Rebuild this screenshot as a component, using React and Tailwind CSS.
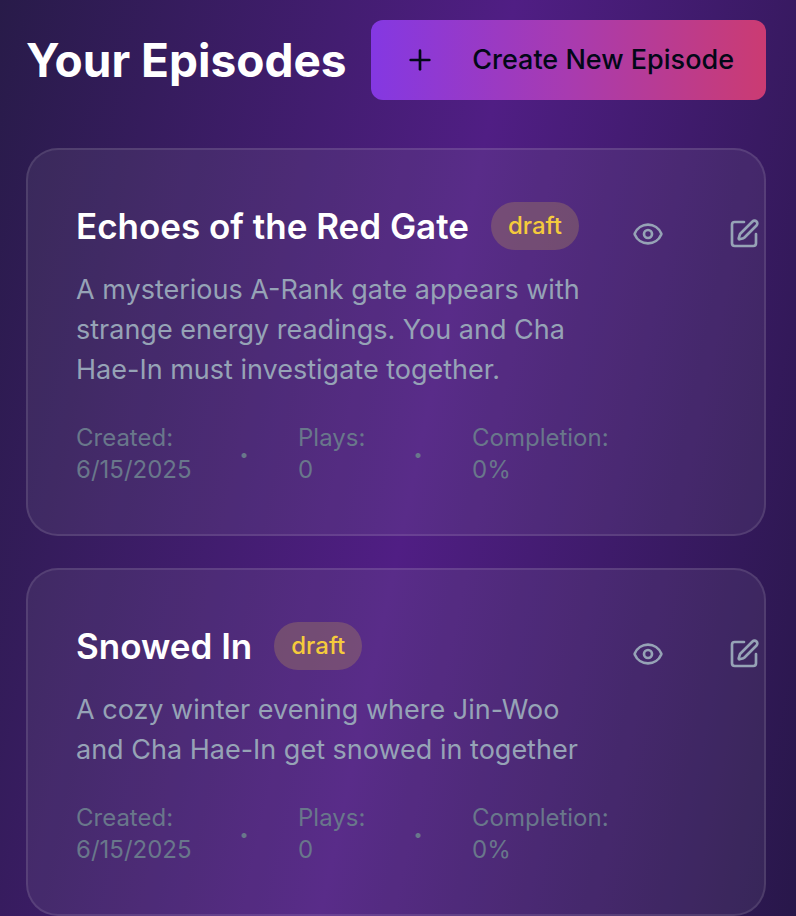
import { Eye, Plus, SquarePen } from "lucide-react";

const episodes = [
  {
    id: "red-gate",
    title: "Echoes of the Red Gate",
    status: "draft",
    description:
      "A mysterious A-Rank gate appears with strange energy readings. You and Cha Hae-In must investigate together.",
    created: "6/15/2025",
    plays: 0,
    completion: "0%",
  },
  {
    id: "snowed-in",
    title: "Snowed In",
    status: "draft",
    description: "A cozy winter evening where Jin-Woo and Cha Hae-In get snowed in together",
    created: "6/15/2025",
    plays: 0,
    completion: "0%",
  },
];

function Stat({ label, value, className }) {
  return (
    <div className={className}>
      <dt>{label}:</dt>
      <dd>{value}</dd>
    </div>
  );
}

function Dot() {
  return (
    <div aria-hidden="true" className="w-3 shrink-0 text-center text-base leading-8">
      •
    </div>
  );
}

function IconButton({ label, icon: Icon }) {
  return (
    <button
      type="button"
      aria-label={label}
      className="flex h-[72px] w-20 shrink-0 items-center justify-center rounded-lg text-[#96a3b6]"
    >
      <Icon className="size-8" />
    </button>
  );
}

function EpisodeCard({ episode }) {
  return (
    <article className="flex items-start rounded-[32px] border-2 border-white/10 bg-[#a090b0]/12 p-12">
      <div className="min-w-0 flex-1">
        <div className="flex items-center gap-[22px]">
          <h2 className="text-[35px] leading-[56px] font-semibold whitespace-nowrap text-white">
            {episode.title}
          </h2>
          <span className="w-[88px] rounded-full bg-[#b08a5c]/35 py-2 text-center text-2xl leading-8 font-medium text-[#f5cb3c]">
            {episode.status}
          </span>
        </div>
        <p className="mt-4 text-[27px] leading-10 text-[#96a3b6]">{episode.description}</p>
        <dl className="mt-8 flex items-center gap-12 text-2xl leading-8 text-[#69778b]">
          <Stat label="Created" value={episode.created} className="w-[114px]" />
          <Dot />
          <Stat label="Plays" value={episode.plays} className="w-[66px]" />
          <Dot />
          <Stat label="Completion" value={episode.completion} />
        </dl>
      </div>
      <div className="flex w-[108px] shrink-0 gap-4">
        <IconButton label={`Preview ${episode.title}`} icon={Eye} />
        <IconButton label={`Edit ${episode.title}`} icon={SquarePen} />
      </div>
    </article>
  );
}

export default function App() {
  return (
    <main className="min-h-screen overflow-x-hidden bg-[linear-gradient(102deg,#281b49_0%,#501e84_52%,#28174a_100%)] pt-5 pr-[30px] pl-[26px] font-[Inter,'Liberation_Sans',sans-serif]">
      <header className="flex items-center justify-between">
        <h1 className="text-[46px] leading-[64px] font-bold whitespace-nowrap text-white">
          Your Episodes
        </h1>
        <button
          type="button"
          className="flex h-20 w-[395px] shrink-0 items-center rounded-xl bg-[linear-gradient(to_right,#8438e2,#a83bb0_50%,#cb3b72)] px-8 text-[27px] leading-10 font-medium whitespace-nowrap text-[#020817]"
        >
          <Plus className="mx-px size-8 shrink-0" />
          <span className="flex-1 text-right">Create New Episode</span>
        </button>
      </header>
      <section aria-label="Episodes" className="mt-12 flex flex-col gap-8">
        {episodes.map((episode) => (
          <EpisodeCard key={episode.id} episode={episode} />
        ))}
      </section>
    </main>
  );
}
